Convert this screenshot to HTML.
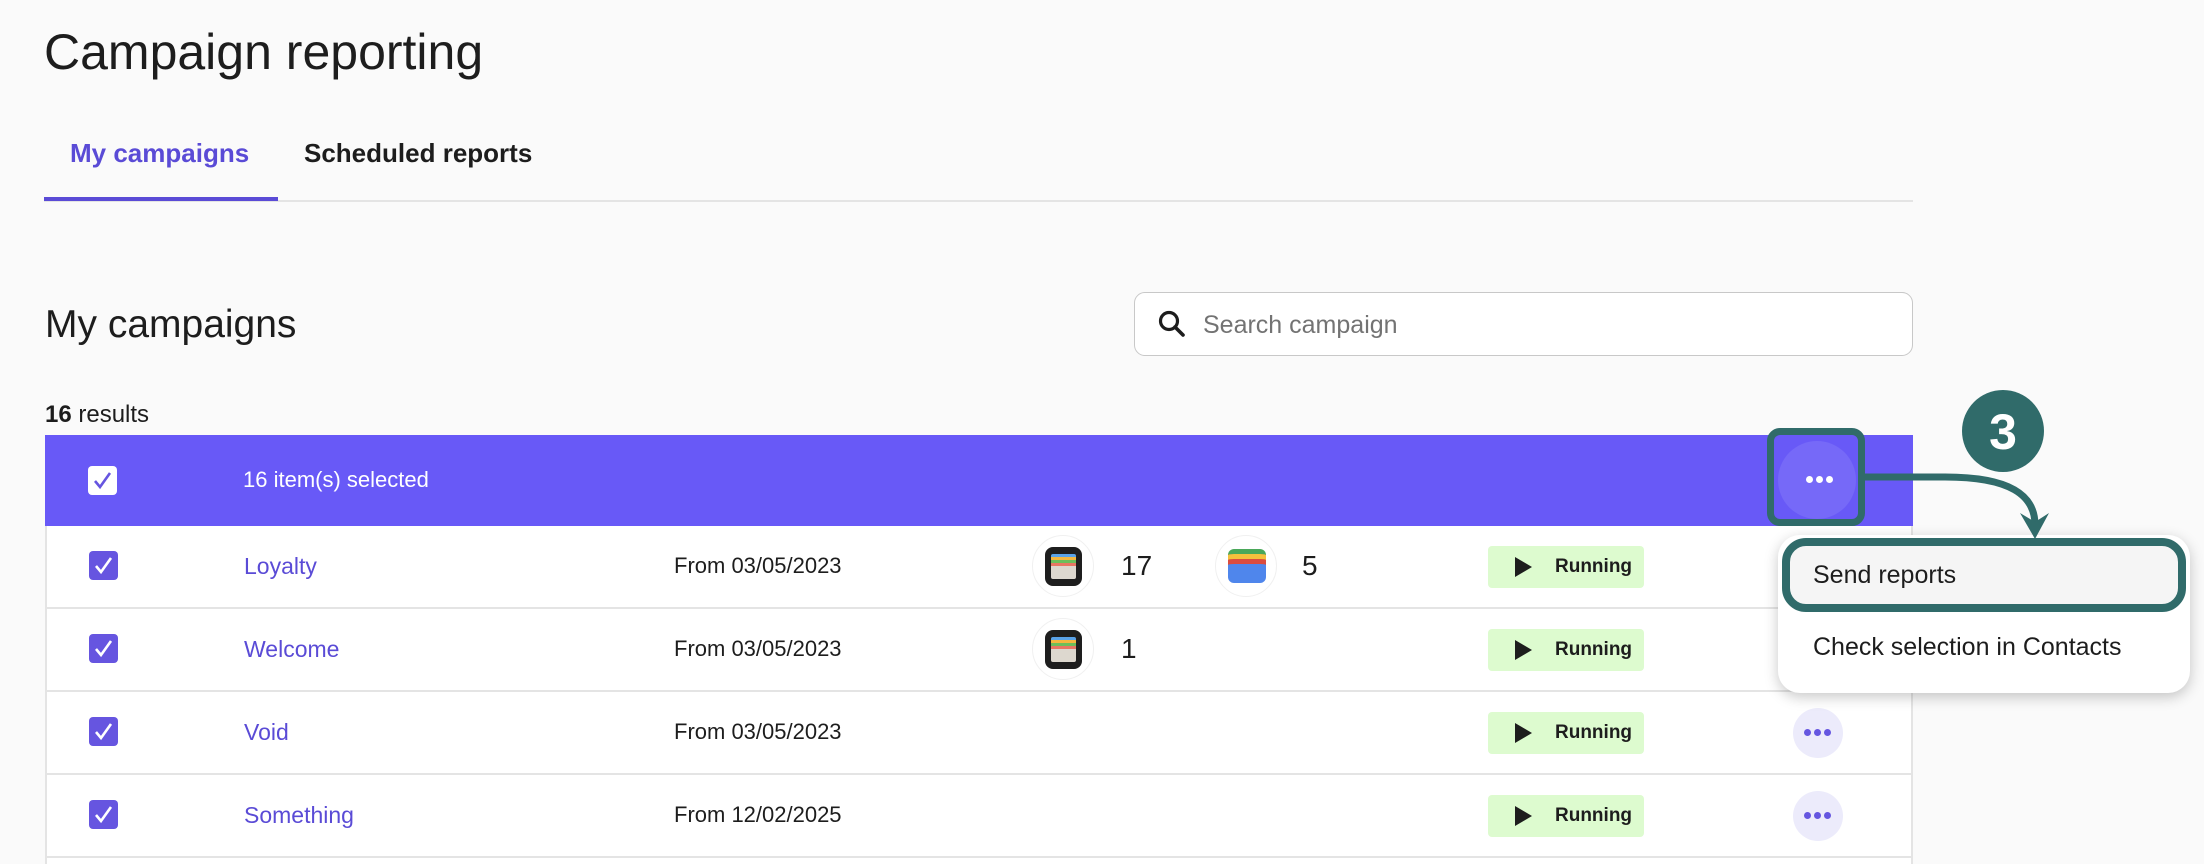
<!DOCTYPE html>
<html style="width:2204px;height:864px;overflow:hidden"><head><meta charset="utf-8"><style>
*{margin:0;padding:0;box-sizing:border-box}
body{width:2204px;height:864px;background:#fafafa;font-family:"Liberation Sans",sans-serif;color:#1d1d1d;position:relative;overflow:hidden}
.a{position:absolute;white-space:nowrap}
.row{position:absolute;left:45px;width:1868px;height:83px;background:#fff;border-bottom:2px solid #e4e4e4;border-left:2px solid #e4e4e4;border-right:2px solid #e4e4e4}
.cb{position:absolute;left:42px;top:25px;width:29px;height:29px;border-radius:4px;background:#6655e0}
.cb svg{position:absolute;left:4px;top:4px}
.name{position:absolute;left:197px;top:27px;font-size:23px;color:#5a4bd6}
.date{position:absolute;left:627px;top:27px;font-size:22px}
.run{position:absolute;left:1441px;top:20px;width:156px;height:42px;background:#ddfbcf;border-radius:4px}
.run i{position:absolute;left:27px;top:11px;width:0;height:0;border-left:17px solid #1d1d1d;border-top:10px solid transparent;border-bottom:10px solid transparent}
.run span{position:absolute;left:67px;top:10px;font-size:19px;font-weight:bold}
.dots{position:absolute;left:1746px;top:16px;width:50px;height:50px;border-radius:50%;background:#ecebfb}
.dots b,.dots b:before,.dots b:after{position:absolute;width:7px;height:7px;border-radius:50%;background:#6556e0}
.dots b{left:21px;top:21px}.dots b:before{content:"";left:-10px;top:0}.dots b:after{content:"";left:10px;top:0}
.wc{position:absolute;width:62px;height:62px;border-radius:50%;border:1px solid #f0f0f0;background:#fff}
.num{position:absolute;font-size:28px;top:24px}
</style></head><body>
<div class="a" style="left:44px;top:23px;font-size:50px">Campaign reporting</div>
<div class="a" style="left:70px;top:138px;font-size:26px;font-weight:bold;color:#5a4bd6">My campaigns</div>
<div class="a" style="left:304px;top:138px;font-size:26px;font-weight:bold">Scheduled reports</div>
<div class="a" style="left:44px;top:200px;width:1869px;height:2px;background:#e4e4e4"></div>
<div class="a" style="left:44px;top:197px;width:234px;height:4px;background:#5a4bd6"></div>
<div class="a" style="left:45px;top:303px;font-size:39px">My campaigns</div>
<div class="a" style="left:1134px;top:292px;width:779px;height:64px;border:1.5px solid #c8c8c8;border-radius:11px;background:#fff">
<svg style="position:absolute;left:22px;top:16px" width="32" height="32" viewBox="0 0 32 32"><circle cx="12" cy="12" r="8.5" fill="none" stroke="#1d1d1d" stroke-width="3.2"/><path d="M18 18l8 8" stroke="#1d1d1d" stroke-width="3.6" stroke-linecap="round"/></svg>
<span class="a" style="left:68px;top:18px;font-size:25px;color:#737373">Search campaign</span></div>
<div class="a" style="left:45px;top:401px;font-size:24px"><b>16</b> results</div>
<div class="a" style="left:45px;top:435px;width:1868px;height:91px;background:#6859f7"></div>
<div class="a" style="left:88px;top:466px;width:29px;height:29px;border-radius:4px;background:#fff"><svg style="position:absolute;left:4px;top:4px" width="21" height="21" viewBox="0 0 21 21"><path d="M3 11l5 6L18 3" fill="none" stroke="#6655e0" stroke-width="2.6"/></svg></div>
<div class="a" style="left:243px;top:467px;font-size:22px;color:#fff">16 item(s) selected</div>
<div class="a" style="left:1778px;top:441px;width:78px;height:78px;border-radius:50%;background:#7669f8"></div>
<div class="a" style="left:1806px;top:476px;width:7px;height:7px;border-radius:50%;background:#fff;box-shadow:10px 0 #fff,20px 0 #fff"></div>

<div class="row" style="top:526px"><div class="cb"><svg width="21" height="21" viewBox="0 0 21 21"><path d="M3 11l5 6L18 3" fill="none" stroke="#fff" stroke-width="2.6"/></svg></div><div class="name">Loyalty</div><div class="date">From 03/05/2023</div>
<div class="wc" style="left:985px;top:9px"><div class="a" style="left:12px;top:11px;width:37px;height:39px;background:#1e1e1e;border-radius:8px"><div class="a" style="left:6px;top:7px;width:25px;height:25px;background:#ddd8cf;border-radius:2px;border-top:3px solid #5aa3e8;box-shadow:inset 0 3px #f4b73f,inset 0 6px #6cbf5a,inset 0 9px #e87663"></div></div></div>
<div class="num" style="left:1074px">17</div>
<div class="wc" style="left:1168px;top:9px"><div class="a" style="left:12px;top:13px;width:38px;height:34px;border-radius:6px;background:#4f86ec;border-top:5px solid #4aa85a;box-shadow:inset 0 5px #f5c13c,inset 0 10px #db4c3f"></div></div>
<div class="num" style="left:1255px">5</div>
<div class="run"><i></i><span>Running</span></div></div>

<div class="row" style="top:609px"><div class="cb"><svg width="21" height="21" viewBox="0 0 21 21"><path d="M3 11l5 6L18 3" fill="none" stroke="#fff" stroke-width="2.6"/></svg></div><div class="name">Welcome</div><div class="date">From 03/05/2023</div>
<div class="wc" style="left:985px;top:9px"><div class="a" style="left:12px;top:11px;width:37px;height:39px;background:#1e1e1e;border-radius:8px"><div class="a" style="left:6px;top:7px;width:25px;height:25px;background:#ddd8cf;border-radius:2px;border-top:3px solid #5aa3e8;box-shadow:inset 0 3px #f4b73f,inset 0 6px #6cbf5a,inset 0 9px #e87663"></div></div></div>
<div class="num" style="left:1074px">1</div>
<div class="run"><i></i><span>Running</span></div></div>

<div class="row" style="top:692px"><div class="cb"><svg width="21" height="21" viewBox="0 0 21 21"><path d="M3 11l5 6L18 3" fill="none" stroke="#fff" stroke-width="2.6"/></svg></div><div class="name">Void</div><div class="date">From 03/05/2023</div>
<div class="run"><i></i><span>Running</span></div><div class="dots"><b></b></div></div>

<div class="row" style="top:775px"><div class="cb"><svg width="21" height="21" viewBox="0 0 21 21"><path d="M3 11l5 6L18 3" fill="none" stroke="#fff" stroke-width="2.6"/></svg></div><div class="name">Something</div><div class="date">From 12/02/2025</div>
<div class="run"><i></i><span>Running</span></div><div class="dots"><b></b></div></div>
<div class="row" style="top:858px;height:6px;border-bottom:none"></div>

<div class="a" style="left:1778px;top:535px;width:412px;height:158px;background:#fff;border-radius:22px;box-shadow:0 4px 14px rgba(0,0,0,.22)">
<div class="a" style="left:4px;top:3px;width:404px;height:74px;border:8px solid #306b6a;border-radius:24px;background:#f5f5f5"></div>
<div class="a" style="left:35px;top:26px;font-size:25px">Send reports</div>
<div class="a" style="left:35px;top:98px;font-size:25px">Check selection in Contacts</div></div>

<div class="a" style="left:1767px;top:428px;width:98px;height:98px;border:7px solid #306b6a;border-radius:13px"></div>
<svg class="a" style="left:0;top:0" width="2204" height="864"><path d="M1865 477H1945C2010 477 2035 495 2035 525" fill="none" stroke="#306b6a" stroke-width="7"/><path d="M2020 513L2035 539L2049 513L2035 522Z" fill="#306b6a"/>
<circle cx="2003" cy="431" r="41" fill="#306b6a"/><text x="2003" y="449" text-anchor="middle" font-family="Liberation Sans" font-weight="bold" font-size="50" fill="#fff">3</text></svg>
</body></html>
